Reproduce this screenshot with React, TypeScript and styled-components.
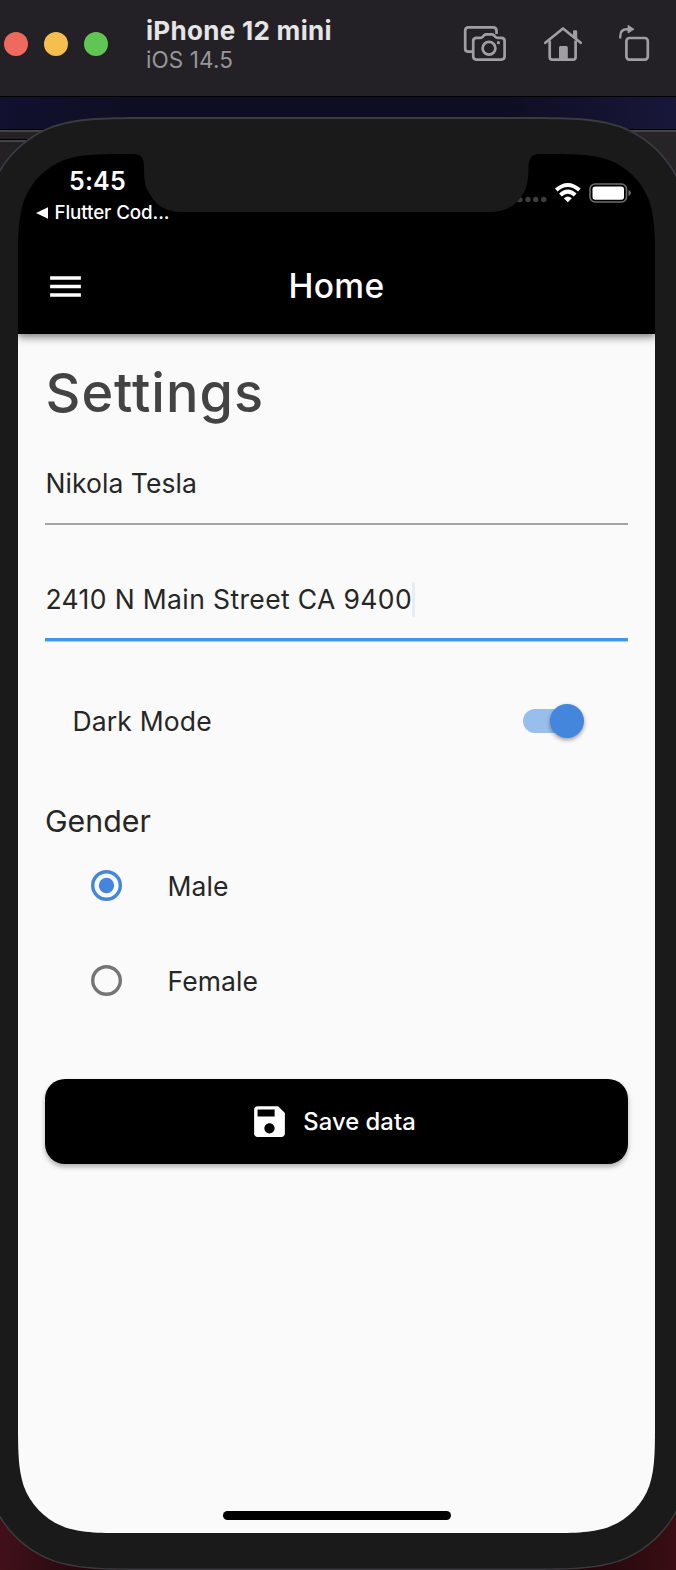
import React, { useState } from 'react';
import styled, { createGlobalStyle } from 'styled-components';

// Continuous-curvature rounded rectangle, as used for device corners.
const squircle = (x: number, y: number, w: number, h: number, r: number) => {
  const a = 1.528665 * r, b = 1.088493 * r, c = 0.868407 * r;
  const d = 0.631494 * r, e = 0.074911 * r, f = 0.372824 * r, g = 0.16906 * r;
  const R = x + w, B = y + h;
  return [
    `M${x + a} ${y}H${R - a}`,
    `C${R - b} ${y} ${R - c} ${y} ${R - d} ${y + e}`,
    `C${R - f} ${y + g} ${R - g} ${y + f} ${R - e} ${y + d}`,
    `C${R} ${y + c} ${R} ${y + b} ${R} ${y + a}`,
    `V${B - a}`,
    `C${R} ${B - b} ${R} ${B - c} ${R - e} ${B - d}`,
    `C${R - g} ${B - f} ${R - f} ${B - g} ${R - d} ${B - e}`,
    `C${R - c} ${B} ${R - b} ${B} ${R - a} ${B}`,
    `H${x + a}`,
    `C${x + b} ${B} ${x + c} ${B} ${x + d} ${B - e}`,
    `C${x + f} ${B - g} ${x + g} ${B - f} ${x + e} ${B - d}`,
    `C${x} ${B - c} ${x} ${B - b} ${x} ${B - a}`,
    `V${y + a}`,
    `C${x} ${y + b} ${x} ${y + c} ${x + e} ${y + d}`,
    `C${x + g} ${y + f} ${x + f} ${y + g} ${x + d} ${y + e}`,
    `C${x + c} ${y} ${x + b} ${y} ${x + a} ${y}Z`,
  ].join('');
};

const Global = createGlobalStyle`
  * { box-sizing: border-box; }
  body { margin: 0; background: #1a1a1a; font-family: Inter, "Liberation Sans", sans-serif; }
  button { font-family: inherit; }
`;

const Page = styled.div`
  width: 676px;
  height: 1570px;
  overflow: hidden;
  display: flex;
  flex-direction: column;
`;

const TitleBar = styled.header`
  flex: none;
  height: 97px;
  display: flex;
  align-items: flex-start;
  background: #232125;
  border-bottom: 1px solid #000;
`;

const Lights = styled.div`
  display: flex;
  gap: 16px;
  padding: 32px 0 0 4px;
`;

const Light = styled.span<{ $color: string }>`
  width: 24px;
  height: 24px;
  border-radius: 50%;
  background: ${(p) => p.$color};
`;

const DeviceInfo = styled.div`
  flex: 1;
  padding: 14px 0 0 38px;
  white-space: nowrap;
`;

const DeviceName = styled.div`
  font-size: 26px;
  line-height: 34px;
  font-weight: 700;
  letter-spacing: 0.3px;
  color: #e6e5e6;
`;

const DeviceOs = styled.div`
  font-size: 22.5px;
  line-height: 24px;
  letter-spacing: 0.1px;
  color: #98969a;
`;

const Tools = styled.svg`
  flex: none;
  width: 220px;
  height: 96px;
`;

const Desktop = styled.main`
  flex: 1;
  min-height: 0;
  overflow: hidden;
  padding-top: 20px;
  background:
    linear-gradient(#000 0 1px, #454346 1px 3px, #232124 3px 10px, #000 10px 11px, #454346 11px 13px, #232124 13px) 0 32px / 200px 200px no-repeat,
    linear-gradient(#000 0 1px, #454346 1px 3px, #262427 3px) 100% 32px / 200px 200px no-repeat,
    linear-gradient(90deg, #43101a, #20080c 14%, #20080c 86%, #3a0d14) 0 100% / 100% 80px no-repeat,
    linear-gradient(90deg, #111130, #0e0e22 20%, #0e0e22 75%, #18173a);
`;

const Rim = styled.div`
  width: 709px;
  height: 1453px;
  margin-left: -18px;
  background: #3b3a3f;
  clip-path: path('${squircle(0, 0, 709, 1453, 113)}');
`;

const Bezel = styled.div`
  height: 1453px;
  padding: 37px 36px;
  background: #1a1a1a;
  clip-path: path('${squircle(1.5, 2, 706, 1449.5, 111.5)}');
`;

const Screen = styled.div`
  position: relative;
  width: 637px;
  height: 1379px;
  display: flex;
  flex-direction: column;
  background: linear-gradient(#000 160px, #fafafa 160px);
  color: #262626;
  clip-path: path('${squircle(0, 0, 637, 1379, 75)}');
`;

const Notch = styled.svg`
  position: absolute;
  top: 0;
  left: 110px;
  width: 420px;
  height: 60px;
`;

const StatusBar = styled.div`
  flex: none;
  height: 85px;
  display: flex;
  justify-content: space-between;
  color: #fff;
`;

const StatusLeft = styled.div`
  position: relative;
  z-index: 1;
  padding: 12px 0 0 18px;
  white-space: nowrap;
`;

const Clock = styled.div`
  padding-left: 33px;
  font-size: 25px;
  line-height: 30px;
  font-weight: 600;
  letter-spacing: 0.2px;
`;

const BackLink = styled.div`
  display: flex;
  align-items: center;
  gap: 6.5px;
  font-size: 18.8px;
  line-height: 33px;
  font-weight: 500;
  letter-spacing: -0.1px;
`;

const StatusIcons = styled.svg`
  width: 142px;
  height: 80px;
`;

const AppBar = styled.div`
  position: relative;
  flex: none;
  height: 95px;
  display: grid;
  grid-template-columns: 94px 1fr 94px;
  align-items: center;
  background: #000;
  color: #fff;
  box-shadow: 0 4px 8px rgba(0, 0, 0, 0.38), 0 2px 4px rgba(0, 0, 0, 0.12);
`;

const MenuIcon = styled.svg`
  width: 41px;
  height: 41px;
  margin-left: 27px;
`;

const AppTitle = styled.div`
  text-align: center;
  font-size: 33.5px;
  line-height: 40px;
  padding-bottom: 2px;
  font-weight: 500;
  letter-spacing: 0.4px;
`;

const Form = styled.section`
  flex: 1;
  display: flex;
  flex-direction: column;
  padding: 28px 27px 0;
`;

const Heading = styled.h1`
  margin: 0;
  padding-left: 0.5px;
  font-size: 54px;
  line-height: 62px;
  font-weight: 500;
  letter-spacing: 1px;
  color: #434343;
`;

const Field = styled.div<{ $active?: boolean }>`
  display: flex;
  align-items: center;
  height: ${(p) => (p.$active ? 77 : 66)}px;
  margin-top: ${(p) => (p.$active ? 39 : 35)}px;
  padding-bottom: ${(p) => (p.$active ? 4 : 16)}px;
  border-bottom: ${(p) => (p.$active ? '3px solid #4794ec' : '2px solid #a3a3a3')};
  box-shadow: ${(p) => (p.$active ? '0 1px 0 #a9cdf5' : 'none')};
`;

const Body = styled.span<{ $spacing?: number }>`
  padding-left: 0.5px;
  font-size: 26.5px;
  line-height: 34px;
  font-weight: 400;
  letter-spacing: ${(p) => p.$spacing ?? 0.15}px;
  white-space: nowrap;
`;

const Caret = styled.span`
  width: 3px;
  height: 35px;
  border-radius: 2px;
  background: #e3eef9;
`;

const SwitchRow = styled.div`
  display: flex;
  justify-content: space-between;
  align-items: center;
  height: 80px;
  margin-top: 40px;
  padding: 0 44px 0 27px;
`;

const Track = styled.button<{ $on: boolean }>`
  display: flex;
  align-items: center;
  justify-content: ${(p) => (p.$on ? 'flex-end' : 'flex-start')};
  width: 61px;
  height: 24px;
  padding: 0;
  border: 0;
  border-radius: 12px;
  background: linear-gradient(90deg, ${(p) => (p.$on ? '#98bfec' : '#aaa')} 75%, transparent 75%);
`;

const Thumb = styled.span`
  flex: none;
  width: 34px;
  height: 34px;
  border-radius: 50%;
  background: #4486dc;
  box-shadow: 0 2px 4px rgba(0, 0, 0, 0.38);
`;

const GroupLabel = styled.div`
  margin-top: 40px;
  font-size: 30.3px;
  line-height: 40px;
`;

const RadioRow = styled.div`
  display: flex;
  align-items: center;
  height: 95px;
  padding-left: 45.5px;
  gap: 45.5px;
`;

const RadioGroup = styled.div`
  margin-top: -3px;
`;

const Radio = styled.svg`
  flex: none;
  width: 31px;
  height: 31px;
`;

const SaveButton = styled.button`
  display: flex;
  align-items: center;
  justify-content: center;
  gap: 13px;
  height: 85px;
  margin-top: 51px;
  padding: 0 8px 0 0;
  border: 0;
  border-radius: 20px;
  background: #000;
  color: #fff;
  font-size: 23.8px;
  font-weight: 500;
  letter-spacing: 0.05px;
  box-shadow: 0 3px 5px rgba(0, 0, 0, 0.3);
`;

const SaveIcon = styled.svg`
  width: 41px;
  height: 41px;
`;

const HomeIndicator = styled.div`
  align-self: center;
  width: 228px;
  height: 8.5px;
  margin-bottom: 13.5px;
  border-radius: 5px;
  background: #000;
`;

const options = ['Male', 'Female'];

export default function App() {
  const [gender, setGender] = useState('Male');
  const [dark, setDark] = useState(true);

  return (
    <Page>
      <Global />
      <TitleBar>
        <Lights>
          <Light $color="#ee6a5f" />
          <Light $color="#f5bf4f" />
          <Light $color="#61c554" />
        </Lights>
        <DeviceInfo>
          <DeviceName>iPhone 12 mini</DeviceName>
          <DeviceOs>iOS 14.5</DeviceOs>
        </DeviceInfo>
        <Tools viewBox="456 0 220 96" fill="none" stroke="#a09ea3" strokeWidth="2.7" strokeLinejoin="round">
          <path d="M472 51.700H468.500Q465.200 51.700 465.200 48.400V30.800Q465.200 27.400 468.500 27.400H493Q496.500 27.400 496.500 30.800V34" />
          <path d="M476.500 37.800H480.500Q481.700 37.800 482.600 36.800L484 35.300Q484.900 34.300 486.200 34.300H491.800Q493.100 34.300 494 35.300L495.400 36.800Q496.300 37.800 497.500 37.800H501.300Q504.600 37.800 504.600 41.100V56.300Q504.600 59.600 501.300 59.600H476.500Q473.200 59.600 473.200 56.300V41.100Q473.200 37.800 476.500 37.800Z" />
          <circle cx="489" cy="48.200" r="6.400" />
          <circle cx="498.400" cy="42.700" r="1.600" fill="#a09ea3" stroke="none" />
          <path strokeLinecap="round" d="M545.300 42.800L563 28.500L580.700 42.800" />
          <path d="M549.700 40.500V57Q549.700 59.600 552.300 59.600H573Q575.600 59.600 575.600 57V40.500" />
          <path d="M559 60V47.500Q559 46 560.500 46H566.300Q567.800 46 567.800 47.500V60ZM573 31.500Q573 30.300 574.200 30.300H576Q577.200 30.300 577.200 31.500V41L573 37.500Z" fill="#a09ea3" stroke="none" />
          <rect x="626.400" y="38" width="21.400" height="21.600" rx="3" />
          <path strokeWidth="2.400" strokeLinecap="round" d="M620.300 37.500V36Q620.300 29.300 627 29.300H629" />
          <path d="M628 25.300L634 29.200L628 33.100Z" fill="#a09ea3" strokeWidth="0.800" />
        </Tools>
      </TitleBar>
      <Desktop>
        <Rim>
          <Bezel>
            <Screen>
              <Notch viewBox="128 154 420 60">
                <path d="M128 154H134C141 154 144 158 144 166C144 180 145 187 149 193C156 206 167 212 182 212H490C505 212 516 206 523 194C527 187 528.500 180 528.500 166C529 158 532 154 539 154Z" fill="#1a1a1a" />
              </Notch>
              <StatusBar>
                <StatusLeft>
                  <Clock>5:45</Clock>
                  <BackLink>
                    <svg width="12" height="12" viewBox="0 0 12 12"><path d="M0 6 12 0.300V11.700Z" fill="#fff" /></svg>
                    Flutter Cod...
                  </BackLink>
                </StatusLeft>
                <StatusIcons viewBox="513 154 142 80">
                  <g fill="#3d3d3d">
                    <path d="M519 197Q522.700 197 522.700 199.500T520 202.200H517Z" />
                    <circle cx="528" cy="199.500" r="2.700" />
                    <circle cx="535.700" cy="199.500" r="2.700" />
                    <circle cx="543.700" cy="199.500" r="2.700" />
                  </g>
                  <g fill="none" stroke="#fff" strokeWidth="3.900">
                    <path d="M556.200 190Q567.800 179.900 579.400 190" />
                    <path d="M560.400 195Q567.800 188.200 575.200 195" />
                  </g>
                  <path d="M563.800 198.200Q567.800 194.700 571.800 198.200L567.800 202.300Z" fill="#fff" />
                  <rect x="590" y="184" width="36.500" height="18" rx="5" fill="none" stroke="#6d6d6d" strokeWidth="1.600" />
                  <rect x="592.500" y="186.500" width="31.500" height="13.300" rx="2.800" fill="#fff" />
                  <path d="M628.500 190Q631 191 631 193T628.500 196Z" fill="#6d6d6d" />
                </StatusIcons>
              </StatusBar>
              <AppBar>
                <MenuIcon viewBox="0 0 24 24" fill="#fff"><path d="M3 18h18v-2H3v2zm0-5h18v-2H3v2zm0-7v2h18V6H3z" /></MenuIcon>
                <AppTitle>Home</AppTitle>
              </AppBar>
              <Form>
                <Heading>Settings</Heading>
                <Field><Body $spacing={0.05}>Nikola Tesla</Body></Field>
                <Field $active><Body $spacing={0.37}>2410 N Main Street CA 9400</Body><Caret /></Field>
                <SwitchRow>
                  <Body>Dark Mode</Body>
                  <Track $on={dark} onClick={() => setDark(!dark)} aria-label="Dark Mode"><Thumb /></Track>
                </SwitchRow>
                <GroupLabel>Gender</GroupLabel>
                <RadioGroup>
                  {options.map((o) => (
                    <RadioRow key={o} onClick={() => setGender(o)}>
                      <Radio viewBox="0 0 31 31" fill={gender === o ? '#4486dc' : '#757575'}>
                        <path fillRule="evenodd" d="M15.500 0A15.500 15.500 0 1 1 15.500 31A15.500 15.500 0 1 1 15.500 0ZM15.500 3.400A12.100 12.100 0 1 0 15.500 27.600A12.100 12.100 0 1 0 15.500 3.400Z" />
                        {gender === o && <circle cx="15.5" cy="15.5" r="7.700" />}
                      </Radio>
                      <Body $spacing={0.1}>{o}</Body>
                    </RadioRow>
                  ))}
                </RadioGroup>
                <SaveButton>
                  <SaveIcon viewBox="0 0 24 24" fill="#fff"><path d="M17 3H5c-1.110 0-2 .9-2 2v14c0 1.100.89 2 2 2h14c1.100 0 2-.9 2-2V7l-4-4zm-5 16c-1.660 0-3-1.340-3-3s1.340-3 3-3 3 1.340 3 3-1.340 3-3 3zm3-10H5V5h10v4z" /></SaveIcon>
                  Save data
                </SaveButton>
              </Form>
              <HomeIndicator />
            </Screen>
          </Bezel>
        </Rim>
      </Desktop>
    </Page>
  );
}
